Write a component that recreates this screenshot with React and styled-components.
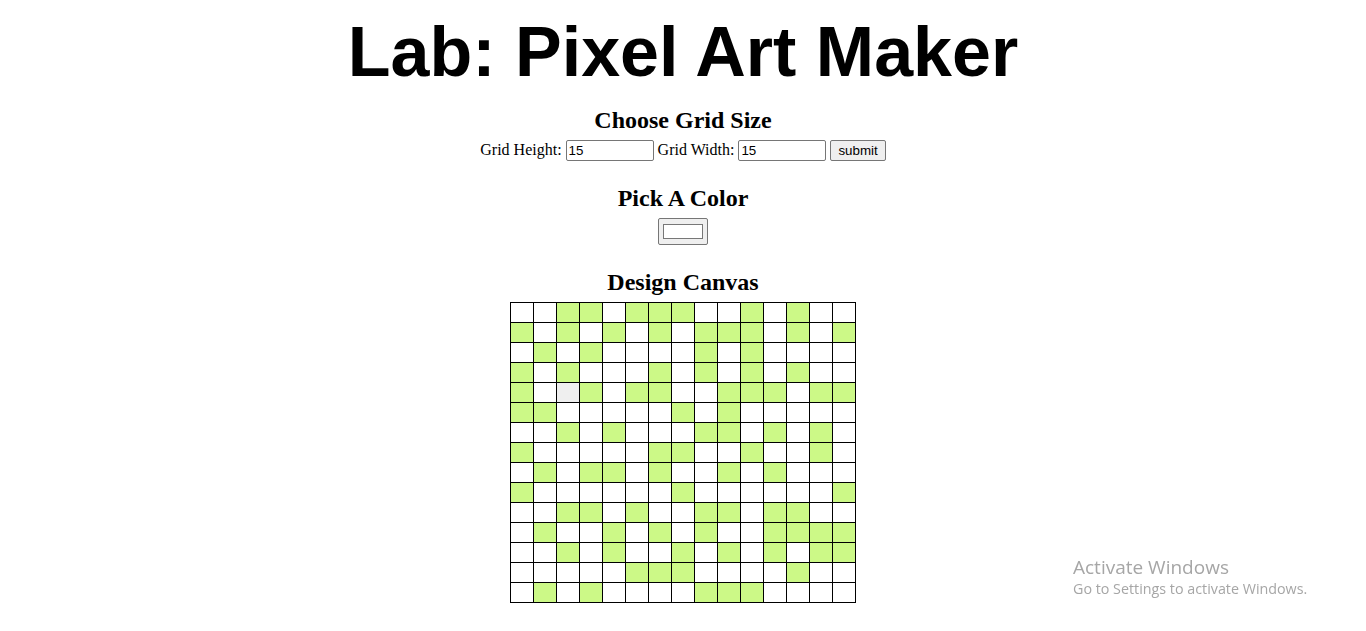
import styled, { createGlobalStyle } from "styled-components";

const GlobalStyle = createGlobalStyle`
  body {
    margin: 8px;
    background: #ffffff;
    font-family: "Liberation Serif", "Times New Roman", serif;
    text-align: center;
  }
`;

const Title = styled.h1`
  font-family: "Liberation Sans", Arial, sans-serif;
  font-size: 70px;
  font-weight: bold;
  margin: 4px 0 14px;
`;

const SectionTitle = styled.h2`
  font-size: 24px;
  font-weight: bold;
  margin: ${(p) => (p.$first ? "15px" : "24px")} 0 6px;
`;

const SizeForm = styled.form`
  font-size: 16px;
`;

const NumberInput = styled.input`
  width: 82px;
  font-family: "Liberation Sans", Arial, sans-serif;
  font-size: 13.33px;
  padding: 2px 2px;
  border: 1px solid #767676;
  border-radius: 2px;
`;

const SubmitButton = styled.button`
  font-family: "Liberation Sans", Arial, sans-serif;
  font-size: 13.33px;
  padding: 2px 7px;
  background: #efefef;
  border: 1px solid #767676;
  border-radius: 2px;
  color: #000;
`;

const ColorInput = styled.input`
  width: 50px;
  height: 27px;
  padding: 1px 2px;
  background: #efefef;
  border: 1px solid #767676;
  border-radius: 2px;
`;

const Canvas = styled.table`
  border-collapse: collapse;
  margin: 0 auto;
  border: 1px solid #000;
`;

const Row = styled.tr`
  height: 20px;
`;

const Cell = styled.td`
  width: 20px;
  padding: 1px;
  border: 1px solid #000;
  background: ${(p) => p.$bg};
`;

const Watermark = styled.div`
  position: fixed;
  left: 1073px;
  top: 555px;
  text-align: left;
  font-family: "Open Sans", "Noto Sans", sans-serif;
  color: #a6a6a6;
`;

const WatermarkTitle = styled.div`
  font-size: 19px;
  line-height: 24px;
`;

const WatermarkText = styled.div`
  font-size: 14.3px;
  line-height: 20px;
`;

// 0 white, 1 green, 2 hovered gray
const pattern = [
  "001101110010100",
  "101010101110101",
  "010100001010000",
  "101000101010100",
  "102101100111011",
  "110000010100000",
  "001010001101010",
  "100000110010010",
  "010110100101000",
  "100000010000001",
  "001101001101100",
  "010010101001111",
  "001010010101011",
  "000001110000100",
  "010100001110000",
];

const colors = ["#ffffff", "#ccf987", "#efefef"];

export default function App() {
  return (
    <>
      <GlobalStyle />
      <Title>Lab: Pixel Art Maker</Title>

      <SectionTitle $first>Choose Grid Size</SectionTitle>
      <SizeForm>
        Grid Height: <NumberInput type="text" defaultValue="15" /> Grid Width:{" "}
        <NumberInput type="text" defaultValue="15" />{" "}
        <SubmitButton type="button">submit</SubmitButton>
      </SizeForm>

      <SectionTitle>Pick A Color</SectionTitle>
      <ColorInput type="color" defaultValue="#ffffff" />

      <SectionTitle>Design Canvas</SectionTitle>
      <Canvas>
        <tbody>
          {pattern.map((row, r) => (
            <Row key={r}>
              {row.split("").map((c, i) => (
                <Cell key={i} $bg={colors[Number(c)]} />
              ))}
            </Row>
          ))}
        </tbody>
      </Canvas>

      <Watermark>
        <WatermarkTitle>Activate Windows</WatermarkTitle>
        <WatermarkText>Go to Settings to activate Windows.</WatermarkText>
      </Watermark>
    </>
  );
}
